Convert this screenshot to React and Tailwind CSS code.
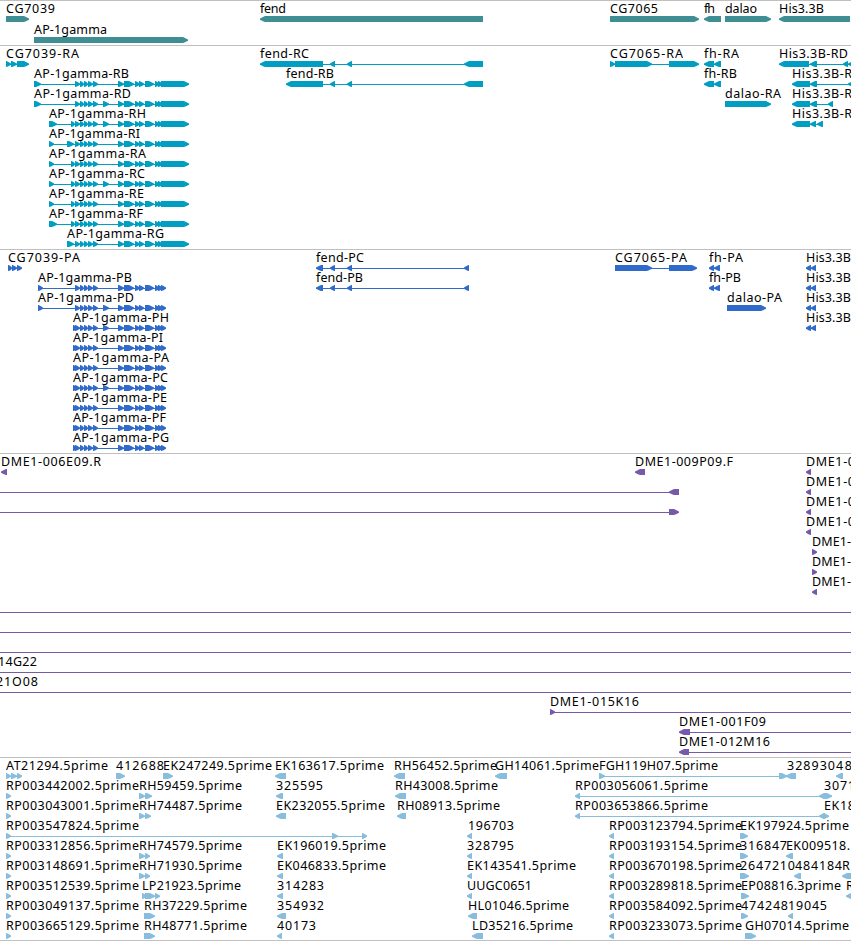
import React from "react";

const VIEW_WIDTH = 851;

// A feature is { label, x, end, dir, exons, line }
// x / end: horizontal extent of the label
// exons: [start, stop, dir?], line: extent of the connector, defaults to the exons
const f = (label, x, end, dir, exons, line) => ({ label, x, end, dir, exons, line });

const genes = [
  [
    f("CG7039", 6, 55, "r", [[6, 29]]),
    f("fend", 260, 286, "l", [[260, 483]]),
    f("CG7065", 610, 658, "r", [[610, 699]]),
    f("fh", 704, 715, "l", [[704, 721]]),
    f("dalao", 725, 757, "r", [[725, 771]]),
    f("His3.3B", 779, 824, "l", [[779, 850]]),
  ],
  [f("AP-1gamma", 34, 107, "r", [[34, 188]])],
];

// Exons shared by all of the AP-1gamma isoforms
const apStart = [[75, 80], [80, 84], [84, 88], [88, 93], [93, 98]];
const apExtra = [[103, 109]];
const apMiddle = [[118, 124], [124, 134], [135, 140], [139, 144], [145, 154], [155, 159], [158, 162]];

const apGamma = (name, end, first, last, extra) =>
  f(`AP-1gamma-${name}`, first[0][0], end, "r", [
    ...first,
    ...apStart,
    ...(extra ? apExtra : []),
    ...apMiddle,
    last,
  ]);

const apR = (name, end, first, extra) => apGamma(name, end, first, [161, 189], extra);
const apP = (name, end, first, extra) => apGamma(name, end, first, [161, 166], extra);

const fendTail = [[330, 335], [347, 352], [464, 483]];

const transcripts = [
  [
    f("CG7039-RA", 6, 79, "r", [[6, 11], [11, 17], [17, 29]]),
    f("fend-RC", 260, 309, "l", [[260, 323], ...fendTail]),
    f("CG7065-RA", 610, 683, "r", [[610, 615], [615, 652], [669, 699]]),
    f("fh-RA", 704, 739, "l", [[704, 714], [714, 721]]),
    f("His3.3B-RD", 779, 848, "l", [[779, 809], [810, 817], [843, 848], [848, 856]]),
  ],
  [
    apR("RB", 129, [[34, 41]]),
    f("fend-RB", 286, 334, "l", [[286, 323], ...fendTail]),
    f("fh-RB", 704, 737, "l", [[704, 714], [714, 721]]),
    f("His3.3B-R", 792, 852, "l", [[792, 810], [810, 817], [848, 856]]),
  ],
  [
    apR("RD", 131, [[34, 41]], true),
    f("dalao-RA", 725, 781, "r", [[725, 771]]),
    f("His3.3B-R", 792, 852, "l", [[792, 810], [810, 817], [828, 833]]),
  ],
  [
    apR("RH", 146, [[49, 57], [71, 75]], true),
    f("His3.3B-R", 792, 852, "l", [[792, 810], [810, 816], [817, 823]]),
  ],
  [apR("RI", 140, [[49, 54], [67, 74]])],
  [apR("RA", 146, [[49, 54], [71, 75]])],
  [apR("RC", 145, [[49, 54], [71, 75]], true)],
  [apR("RE", 144, [[49, 54], [71, 75]])],
  [apR("RF", 143, [[49, 57], [71, 75]])],
  [apR("RG", 164, [[67, 74]])],
];

const fendCds = [[316, 323], [330, 335], [347, 352], [464, 469]];
const hisCds = () => f("His3.3B", 806, 851, "l", [[806, 811], [811, 816]]);

const proteins = [
  [
    f("CG7039-PA", 8, 80, "r", [[8, 12], [12, 17], [17, 22]]),
    f("fend-PC", 316, 364, "l", fendCds),
    f("CG7065-PA", 615, 687, "r", [[615, 652], [669, 697]]),
    f("fh-PA", 709, 743, "l", [[709, 714], [714, 720]]),
    hisCds(),
  ],
  [
    apP("PB", 132, [[38, 43]]),
    f("fend-PB", 316, 363, "l", fendCds),
    f("fh-PB", 709, 741, "l", [[709, 714], [714, 720]]),
    hisCds(),
  ],
  [apP("PD", 134, [[38, 43]], true), f("dalao-PA", 727, 782, "r", [[727, 766]]), hisCds()],
  [apP("PH", 169, [[73, 77]], true), hisCds()],
  [apP("PI", 163, [[73, 77]])],
  [apP("PA", 169, [[73, 77]])],
  [apP("PC", 168, [[73, 77]], true)],
  [apP("PE", 167, [[73, 77]])],
  [apP("PF", 166, [[73, 77]])],
  [apP("PG", 169, [[73, 77]])],
];

const dme = (x, dir) => f(x === 806 ? "DME1-0" : "DME1-", x, x === 806 ? 855 : 851, dir, [[x, x + 5]]);
const span = (label, x, end) => f(label, x, end, "r", [], [0, VIEW_WIDTH]);

const bacs = [
  [
    f("DME1-006E09.R", 1, 101, "l", [[1, 7]]),
    f("DME1-009P09.F", 635, 733, "l", [[635, 645]]),
    dme(806, "l"),
  ],
  [f("", 0, 0, "l", [[669, 679]], [0, 679]), dme(806, "l")],
  [f("", 0, 0, "r", [[669, 679]], [0, 678]), dme(806, "l")],
  [dme(806, "l")],
  [dme(812, "r")],
  [dme(812, "r")],
  [dme(812, "l")],
  [span()],
  [span()],
  [span()],
  [span("14G22", -2, 37)],
  [span("21O08", -4, 38)],
  [f("DME1-015K16", 550, 639, "r", [[550, 555]], [550, VIEW_WIDTH])],
  [f("DME1-001F09", 679, 766, "l", [[679, 690]], [684, VIEW_WIDTH])],
  [f("DME1-012M16", 679, 770, "l", [[679, 689]], [684, VIEW_WIDTH])],
];

const rpLeft = (id) => f(`RP${id}.5prime`, 6, 139, "r", [[6, 11]]);
const rpRight = (id) => f(`RP${id}.5prime`, 609, 742, "l", [[609, 614]]);

const ests = [
  [
    f("AT21294.5prime", 6, 108, "r", [[6, 11], [11, 17], [17, 22]]),
    f("412688", 116, 164, "r", [[116, 125]]),
    f("EK247249.5prime", 163, 272, "r", [[163, 173]]),
    f("EK163617.5prime", 275, 384, "l", [[275, 286]]),
    f("RH56452.5prime", 394, 497, "l", [[394, 405]]),
    f("GH14061.5prime", 495, 599, "l", [[495, 507]]),
    f("FGH119H07.5prime", 599, 718, "r", [[599, 605], [779, 787]]),
    f("328930", 787, 835, "l", [[786, 796]]),
    f("48", 836, 852, "l", [[836, 843]]),
  ],
  [
    rpLeft("003442002"),
    f("RH59459.5prime", 139, 242, "r", [[139, 145], [145, 152]]),
    f("325595", 276, 323, "l", [[276, 283]]),
    f("RH43008.5prime", 395, 498, "l", [[395, 406]]),
    f("RP003056061.5prime", 575, 708, "l", [[575, 580], [819, 827], [824, 832, "r"]]),
    f("3071", 824, 855, "l", []),
  ],
  [
    rpLeft("003043001"),
    f("RH74487.5prime", 139, 242, "r", [[139, 145], [145, 151]]),
    f("EK232055.5prime", 276, 385, "l", [[276, 286]]),
    f("RH08913.5prime", 397, 500, "l", [[397, 406]]),
    f("RP003653866.5prime", 575, 708, "l", [[575, 580], [819, 825], [823, 829, "r"]]),
    f("EK18", 824, 855, "l", []),
  ],
  [
    f("RP003547824.5prime", 6, 139, "r", [[6, 11], [332, 338], [362, 367]]),
    f("196703", 468, 514, "l", [[467, 472]]),
    rpRight("003123794"),
    f("EK197924.5prime", 740, 849, "r", [[740, 748]]),
  ],
  [
    rpLeft("003312856"),
    f("RH74579.5prime", 139, 242, "r", [[139, 145], [145, 150]]),
    f("EK196019.5prime", 277, 386, "l", [[277, 283]]),
    f("328795", 467, 514, "l", [[467, 472]]),
    rpRight("003193154"),
    f("316847", 740, 787, "r", [[740, 748]]),
    f("EK009518.", 786, 850, "l", [[786, 793]]),
  ],
  [
    rpLeft("003148691"),
    f("RH71930.5prime", 139, 242, "r", [[139, 145], [145, 150]]),
    f("EK046833.5prime", 277, 386, "l", [[277, 283]]),
    f("EK143541.5prime", 467, 576, "l", [[467, 472]]),
    rpRight("003670198"),
    f("2647210", 740, 795, "r", [[740, 749]]),
    f("484184", 795, 842, "l", [[794, 801]]),
    f("R", 842, 850, "l", [[842, 856]]),
  ],
  [
    rpLeft("003512539"),
    f("LP21923.5prime", 142, 241, "r", [[142, 147], [145, 155], [155, 160]]),
    f("314283", 277, 324, "l", [[277, 283]]),
    f("UUGC0651", 467, 532, "l", [[467, 472]]),
    rpRight("003289818"),
    f("EP08816.3prime", 741, 841, "r", [[741, 749]]),
    f("R", 846, 854, "l", [[846, 856]]),
  ],
  [
    rpLeft("003049137"),
    f("RH37229.5prime", 144, 247, "r", [[144, 155]]),
    f("354932", 277, 324, "l", [[277, 286]]),
    f("HL01046.5prime", 468, 569, "l", [[468, 477]]),
    rpRight("003584092"),
    f("474248", 741, 788, "r", [[741, 748]]),
    f("19045", 788, 827, "l", [[788, 793]]),
  ],
  [
    rpLeft("003665129"),
    f("RH48771.5prime", 144, 247, "r", [[144, 155]]),
    f("40173", 277, 316, "l", [[277, 282]]),
    f("LD35216.5prime", 472, 573, "l", [[472, 483]]),
    rpRight("003233073"),
    f("GH07014.5prime", 745, 849, "r", [[745, 756]]),
  ],
];

const tracks = [
  { id: "genes", rows: genes, color: "text-[#3f8e93]", row: "h-[21px]", pad: "pb-[2px]" },
  { id: "transcripts", rows: transcripts, color: "text-[#009fc1]", row: "h-5", pad: "pb-[3px]" },
  { id: "proteins", rows: proteins, color: "text-[#306bcb]", row: "h-5", pad: "pb-[3px]" },
  { id: "bacs", rows: bacs, color: "text-[#7659a8]", row: "h-5", pad: "pb-[3px]" },
  { id: "ests", rows: ests, color: "text-[#89bddd]", row: "h-5", pad: "pb-[2px]" },
];

function Exon({ start, stop, dir }) {
  // tail is the flat end, tip the pointed one
  const [tail, tip, sign] = dir === "r" ? [start, stop, 1] : [stop, start, -1];
  const neck = tip - sign * Math.min(5, stop - start - 0.5);
  const points = [
    [tail, 15],
    [neck, 15],
    [neck + sign * 2, 16],
    [tip, 17.4],
    [tip, 18.8],
    [neck + sign * 2, 20.2],
    [neck, 21],
    [tail, 21],
  ];
  return <polygon points={points.map((p) => p.join(",")).join(" ")} />;
}

function Feature({ feature }) {
  const { label, x, end, dir, exons, line } = feature;
  const connector = line || (exons.length > 1 ? [exons[0][0], exons[exons.length - 1][1]] : null);

  return (
    <g>
      {connector && <rect x={connector[0]} y="18" width={connector[1] - connector[0]} height="1" />}
      {exons.map(([start, stop, exonDir]) => (
        <Exon key={start} start={start} stop={stop} dir={exonDir || dir} />
      ))}
      {label && (
        <text x={x} y="12" textLength={end - x} className="fill-black">
          {label}
        </text>
      )}
    </g>
  );
}

function Track({ track }) {
  return (
    <section className={`flex flex-col border-t border-[#c0c0c0] ${track.color} ${track.pad}`}>
      {track.rows.map((features, i) => (
        <svg key={i} className={`block w-[851px] shrink-0 overflow-visible fill-current ${track.row}`}>
          {features.map((feature, j) => (
            <Feature key={j} feature={feature} />
          ))}
        </svg>
      ))}
    </section>
  );
}

export default function App() {
  return (
    <main className="w-[851px] h-[941px] overflow-hidden bg-white border-b border-[#c0c0c0] font-['Noto_Sans','DejaVu_Sans',sans-serif] text-[12.5px]">
      {tracks.map((track) => (
        <Track key={track.id} track={track} />
      ))}
    </main>
  );
}
